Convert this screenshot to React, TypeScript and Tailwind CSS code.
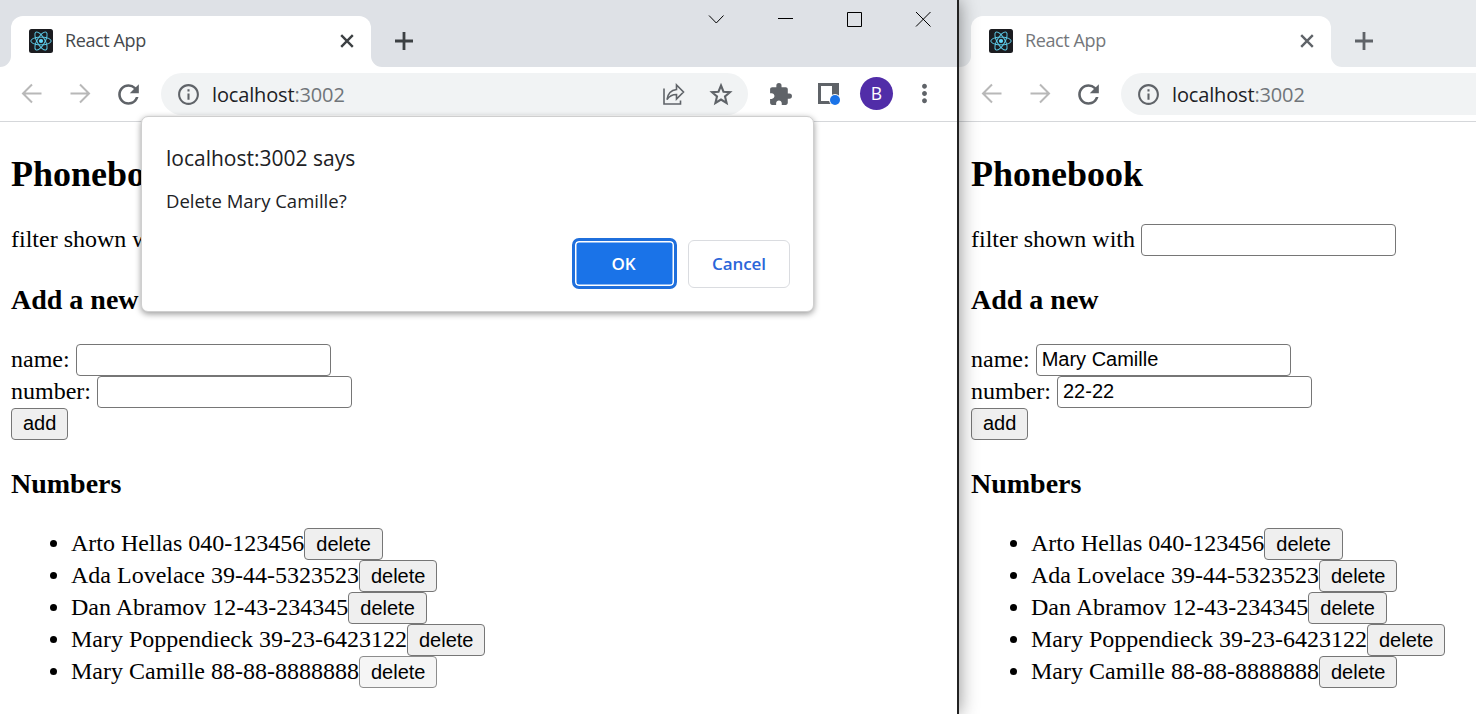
import React from "react";
import { MdExtension, MdInfoOutline, MdMoreVert, MdRefresh } from "react-icons/md";
import clsx from "clsx";

const people = [
  { name: "Arto Hellas", number: "040-123456" },
  { name: "Ada Lovelace", number: "39-44-5323523" },
  { name: "Dan Abramov", number: "12-43-234345" },
  { name: "Mary Poppendieck", number: "39-23-6423122" },
  { name: "Mary Camille", number: "88-88-8888888" },
];

function ReactLogo() {
  return (
    <svg viewBox="0 0 24 24" className="size-6 shrink-0">
      <rect width="24" height="24" rx="2.5" fill="#1b1c20" />
      <g fill="none" stroke="#5ccbe8" strokeWidth="1">
        <ellipse cx="12" cy="12" rx="10.2" ry="3.9" />
        <ellipse cx="12" cy="12" rx="10.2" ry="3.9" transform="rotate(60 12 12)" />
        <ellipse cx="12" cy="12" rx="10.2" ry="3.9" transform="rotate(120 12 12)" />
      </g>
      <circle cx="12" cy="12" r="2.1" fill="#61dafb" />
    </svg>
  );
}

function Arrow({ flip = false }: { flip?: boolean }) {
  return (
    <svg viewBox="0 0 24 24" className={clsx("size-6 shrink-0", flip && "-scale-x-100")}>
      <path d="M21.5 11.5H3.5M12 2.5l-9 9 9 9" fill="none" stroke="#b8b8b8" strokeWidth="2" />
    </svg>
  );
}

function TabFoot({ right = false }: { right?: boolean }) {
  return (
    <svg viewBox="0 0 11 11" className={clsx("size-[11px] shrink-0 self-end", right && "-scale-x-100")}>
      <path d="M11 0v11H0A11 11 0 0 0 11 0z" fill="#fff" />
    </svg>
  );
}

function WindowControls() {
  return (
    <div className="ml-auto flex gap-[45px] pt-[7px] pr-[22px]">
      {["M5 8.5l7.3 7.5 7.2-7.5", "M5 11.5h15", "M5.5 5.5h14v14h-14z", "M5 5l14.5 14.5M19.5 5L5 19.5"].map((d) => (
        <svg key={d} viewBox="0 0 24 24" className="size-6">
          <path d={d} fill="none" stroke="#000" strokeWidth="1" />
        </svg>
      ))}
    </div>
  );
}

function ToolbarActions() {
  return (
    <div className="flex items-center text-[#5f6368]">
      <MdExtension className="ml-5 size-[25px]" />
      <svg viewBox="0 0 24 24" className="ml-6 size-6">
        <path d="M1 1h21v21H1zM4 4v15h11V4z" fill="currentColor" fillRule="evenodd" />
        <circle cx="18" cy="18" r="6" fill="#fff" />
        <circle cx="18" cy="18" r="5" fill="#1a73e8" />
      </svg>
      <span className="mb-0.5 ml-[19px] flex size-[33px] items-center justify-center rounded-full bg-[#512da8] text-[17.5px] text-white">
        B
      </span>
      <MdMoreVert className="mb-px ml-[17px] size-[29px]" />
    </div>
  );
}

type WindowProps = { active?: boolean; children: React.ReactNode };

function BrowserWindow({ active = false, children }: WindowProps) {
  return (
    <div className="flex min-w-0 flex-1 flex-col bg-white">
      <header className={clsx("flex h-[67px] font-['Open_Sans',sans-serif]", active ? "bg-[#dee1e6]" : "bg-[#e7eaed] pl-px")}>
        <div className="flex pt-4">
          <TabFoot />
          <div className="flex w-[360px] items-center rounded-t-xl bg-white pb-0.5 pl-[18px]">
            <ReactLogo />
            <span className={clsx("ml-3 text-[18px] tracking-[-0.4px]", active ? "text-[#45494d]" : "text-[#74777b]")}>
              React App
            </span>
            <svg viewBox="0 0 24 24" className={clsx("mr-3 ml-auto size-6", active ? "text-[#3c4043]" : "text-[#5f6368]")}>
              <path d="M6.2 6.2l11.6 11.6M17.8 6.2L6.2 17.8" stroke="currentColor" strokeWidth="2.4" />
            </svg>
          </div>
          <TabFoot right />
          <svg viewBox="0 0 24 24" className={clsx("mt-[13px] ml-[10px] size-6", active ? "text-[#3c4043]" : "text-[#5f6368]")}>
            <path d="M12 3v18M3 12h18" stroke="currentColor" strokeWidth="2.8" />
          </svg>
        </div>
        {active && <WindowControls />}
      </header>
      <div
        className={clsx(
          "flex h-[55px] items-center border-b border-[#d5d7da] font-['Open_Sans',sans-serif]",
          active ? "pl-[20px]" : "pl-[21px]",
        )}
      >
        <div className="flex shrink-0 items-center gap-6">
          <Arrow />
          <Arrow flip />
          <MdRefresh className="-mx-[3.5px] size-[31px] text-[#5f6368]" />
        </div>
        <div
          className={clsx(
            "ml-[21px] flex h-[42px] items-center bg-[#f1f3f4] pl-[15px]",
            active ? "w-[587px] rounded-full" : "flex-1 rounded-l-full",
          )}
        >
          <MdInfoOutline className="size-[25px] text-[#5f6368]" />
          <span className="mt-0.5 ml-[11px] text-[20px] tracking-[-0.15px] text-[#202124]">
            localhost<span className="text-[#70757a]">:3002</span>
          </span>
          {active && (
            <div className="mr-[14px] ml-auto flex items-center gap-[21px] text-[#5f6368]">
              <svg viewBox="0 0 26 26" className="size-[26px]">
                <path
                  d="M3 7.5V23h16.500v-3.500M15.500 4v4.500C9.500 9.300 6.800 12.500 6 18.500c2.400-3.500 5.200-5 9.500-5V18L22.500 11z"
                  fill="none"
                  stroke="currentColor"
                  strokeWidth="1.6"
                />
              </svg>
              <svg viewBox="0 0 26 26" className="size-[26px]">
                <path
                  d="M13 4.500l2.500 6.200 6.500.5-5 4.300 1.600 6.500-5.600-3.500L7.400 22 9 15.500l-5-4.300 6.500-.5z"
                  fill="none"
                  stroke="currentColor"
                  strokeWidth="2.100"
                />
              </svg>
            </div>
          )}
        </div>
        {active && <ToolbarActions />}
      </div>
      {children}
    </div>
  );
}

function Button({ label, hovered = false, className }: { label: string; hovered?: boolean; className?: string }) {
  return (
    <button
      className={clsx(
        "h-8 shrink-0 rounded-[4px] border px-[11px] font-['Liberation_Sans',sans-serif] text-[20px] text-black",
        hovered ? "border-[#8d8d8d] bg-[#f5f5f5]" : "border-[#767676] bg-[#efefef]",
        className,
      )}
    >
      {label}
    </button>
  );
}

function Field({ label, value = "" }: { label: string; value?: string }) {
  return (
    <label className="flex h-8 items-center gap-1.5 whitespace-nowrap">
      <span className="pb-0.5">{label}</span>
      <input
        readOnly
        value={value}
        className="h-8 w-[255px] rounded-[4px] border border-[#767676] bg-white pb-px pl-[5px] font-['Liberation_Sans',sans-serif] text-[20px] text-black"
      />
    </label>
  );
}

type PhonebookProps = { name?: string; number?: string; pad: string; hoveredRow?: number };

function Phonebook({ name, number, pad, hoveredRow }: PhonebookProps) {
  return (
    <main className={clsx("font-['Liberation_Serif',serif] text-[24px] leading-[28px] text-black", pad)}>
      <h2 className="mt-8 text-[36px] leading-[41px] font-bold">Phonebook</h2>
      <div className="mt-[29px]">
        <Field label="filter shown with" />
      </div>
      <h3 className="my-7 text-[28px] leading-8 font-bold">Add a new</h3>
      <form>
        <Field label="name:" value={name} />
        <Field label="number:" value={number} />
        <div className="flex">
          <Button label="add" className="pb-0.5 leading-[26px]" />
        </div>
      </form>
      <h3 className="my-7 text-[28px] leading-8 font-bold">Numbers</h3>
      <ul>
        {people.map((p, i) => (
          <li key={p.name} className="flex h-8 items-center pl-[38px] whitespace-nowrap">
            <span className="mr-[14px] mb-px ml-px size-[7px] rounded-full bg-black" />
            <span className="pb-0.5">
              {p.name} {p.number}
            </span>
            <Button label="delete" hovered={i === hoveredRow} className="leading-[28px]" />
          </li>
        ))}
      </ul>
    </main>
  );
}

function ConfirmDialog() {
  return (
    <div
      role="dialog"
      className="absolute top-[116px] left-[141px] flex h-[196px] w-[673px] flex-col rounded-[7px] border border-[#cfcfcf] bg-white px-6 font-['Open_Sans',sans-serif] text-[#202124] shadow-[0_2px_6px_rgba(0,0,0,0.4)]"
    >
      <p className="mt-[26px] text-[21px] leading-[30px]">localhost:3002 says</p>
      <p className="mt-[15px] text-[18.5px] leading-[26px]">Delete Mary Camille?</p>
      <div className="mt-6 -mr-px flex items-center justify-end gap-[11px] text-[17px] font-semibold tracking-[-0.1px]">
        <button className="h-[51px] w-[105px] rounded-[7px] border-[3px] border-[#1f6fdc] bg-[#1a73e8] pr-0.5 text-white shadow-[inset_0_0_0_1.5px_#fff]">
          OK
        </button>
        <button className="h-12 w-[102px] rounded-[6px] border border-[#dadce0] text-[#2b66d9]">Cancel</button>
      </div>
    </div>
  );
}

export default function App() {
  return (
    <div className="flex h-[714px] w-[1476px] overflow-hidden bg-white">
      <div className="relative z-10 flex w-[959px] shrink-0 border-r-2 border-[#222] shadow-[0_0_18px_rgba(0,0,0,0.45)]">
        <BrowserWindow active>
          <Phonebook pad="pl-[11px]" hoveredRow={4} />
        </BrowserWindow>
        <ConfirmDialog />
      </div>
      <BrowserWindow>
        <Phonebook pad="pl-3" name="Mary Camille" number="22-22" />
      </BrowserWindow>
    </div>
  );
}
